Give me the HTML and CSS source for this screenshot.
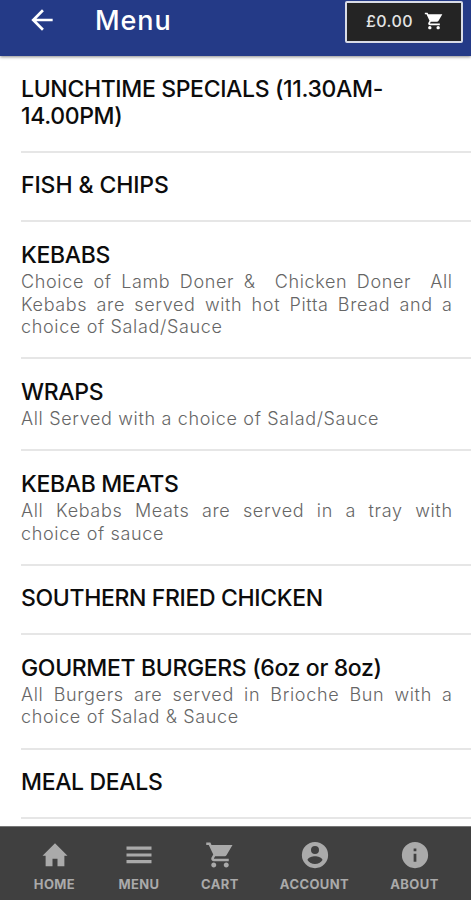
FILE: index.html
```html
<!DOCTYPE html>
<html lang="en">
<head>
<meta charset="utf-8">
<title>Menu</title>
<link rel="stylesheet" href="styles.css">
</head>
<body>
<div class="app">
  <header class="topbar">
    <svg class="back" viewBox="0 0 24 24"><path d="M20 11H7.83l5.59-5.59L12 4l-8 8 8 8 1.41-1.41L7.83 13H20v-2z"/></svg>
    <h1 class="title">Menu</h1>
    <div class="basket">
      <span class="total">£0.00</span>
      <svg class="basket-icon" viewBox="0 0 24 24"><path d="M7 18c-1.1 0-1.99.9-1.99 2S5.9 22 7 22s2-.9 2-2-.9-2-2-2zM1 2v2h2l3.6 7.59-1.35 2.45c-.16.28-.25.61-.25.96 0 1.1.9 2 2 2h12v-2H7.42c-.14 0-.25-.11-.25-.25l.03-.12.9-1.63h7.45c.75 0 1.41-.41 1.75-1.03L22 4H5.21l-.94-2H1zm16 16c-1.1 0-1.99.9-1.99 2s.89 2 1.99 2 2-.9 2-2-.9-2-2-2z"/></svg>
    </div>
  </header>
  <main class="list">
    <section class="row"><h2 class="name">LUNCHTIME SPECIALS (11.30AM-<br>14.00PM)</h2></section>
    <section class="row"><h2 class="name fish">FISH &amp; CHIPS</h2></section>
    <section class="row"><h2 class="name">KEBABS</h2>
      <p class="desc"><span class="line full">Choice of Lamb Doner &amp;&nbsp; Chicken Doner&nbsp; All</span><span class="line full">Kebabs are served with hot Pitta Bread and a</span><span class="line">choice of Salad/Sauce</span></p></section>
    <section class="row"><h2 class="name">WRAPS</h2>
      <p class="desc"><span class="line">All Served with a choice of Salad/Sauce</span></p></section>
    <section class="row"><h2 class="name">KEBAB MEATS</h2>
      <p class="desc"><span class="line full">All Kebabs Meats are served in a tray with</span><span class="line">choice of sauce</span></p></section>
    <section class="row"><h2 class="name">SOUTHERN FRIED CHICKEN</h2></section>
    <section class="row"><h2 class="name">GOURMET BURGERS (6oz or 8oz)</h2>
      <p class="desc"><span class="line full">All Burgers are served in Brioche Bun with a</span><span class="line">choice of Salad &amp; Sauce</span></p></section>
    <section class="row"><h2 class="name">MEAL DEALS</h2></section>
  </main>
  <nav class="tabs">
    <div class="tab"><svg viewBox="0 0 24 24"><path d="M10 21v-6h4v6h5.500v-8.500H22L12 2.500 2 12.500h2.500V21z"/></svg><span>HOME</span></div>
    <div class="tab"><svg viewBox="0 0 24 24"><path d="M2 18.500h20v-2.500H2v2.500zm0-5.300h20v-2.400H2v2.400zM2 5.200v2.500h20V5.200z"/></svg><span>MENU</span></div>
    <div class="tab"><svg viewBox="0 0 24 24"><path d="M7 18c-1.1 0-1.99.9-1.99 2S5.9 22 7 22s2-.9 2-2-.9-2-2-2zM1 2v2h2l3.6 7.59-1.35 2.45c-.16.28-.25.61-.25.96 0 1.1.9 2 2 2h12v-2H7.42c-.14 0-.25-.11-.25-.25l.03-.12.9-1.63h7.45c.75 0 1.41-.41 1.75-1.03L22 4H5.21l-.94-2H1zm16 16c-1.1 0-1.99.9-1.99 2s.89 2 1.99 2 2-.9 2-2-.9-2-2-2z"/></svg><span>CART</span></div>
    <div class="tab"><svg viewBox="0 0 24 24"><path d="M12 1.500a10.500 10.500 0 1 0 0 21 10.500 10.500 0 0 0 0-21zm0 3.200a3.200 3.200 0 1 1 0 6.400 3.200 3.200 0 0 1 0-6.400zm0 14.500c-2.500 0-4.710-1.280-6-3.220.03-1.990 4-3.080 6-3.080s5.970 1.090 6 3.080a7.200 7.200 0 0 1-6 3.220z"/></svg><span>ACCOUNT</span></div>
    <div class="tab"><svg viewBox="0 0 24 24"><path d="M12 1.500a10.500 10.500 0 1 0 0 21 10.500 10.500 0 0 0 0-21zm1.100 15.800h-2.200V11h2.200v6.300zm0-8.300h-2.200V6.800h2.200V9z"/></svg><span>ABOUT</span></div>
  </nav>
</div>
</body>
</html>
```
FILE: styles.css
```css
* { box-sizing: border-box; }
body { margin: 0; background: #fff; font-family: Inter, "Liberation Sans", sans-serif; }
.app { height: 900px; display: flex; flex-direction: column; overflow: hidden; }
.topbar { flex: none; height: 56.4px; display: flex; align-items: flex-start; background: #243a87; color: #fff; padding-right: 8px; box-shadow: 0 1px 3px #0007; z-index: 1; }
.back { width: 32px; height: 32px; margin: 4px 0 0 26px; fill: #fff; }
.title { margin: 5px 0 0 37px; font-size: 27px; line-height: 32px; font-weight: 500; letter-spacing: 0.9px; }
.basket { margin: 1px 0 0 auto; width: 118px; height: 42px; border: 2px solid #d8dbe6; border-radius: 2px; background: #242424; display: flex; align-items: center; padding: 0 17px 3px 19px; justify-content: space-between; }
.total { font-size: 16px; font-weight: 500; letter-spacing: 0.4px; color: #e4e4e4; }
.basket-icon { width: 20px; height: 20px; fill: #fff; }
.list { flex: 1; min-height: 0; overflow: hidden; padding-left: 21px; }
.row { padding: 19.3px 19px 21.2px 0; border-bottom: 2px solid #e6e6e6; }
.name { margin: 0; font-size: 23px; line-height: 27px; font-weight: 500; letter-spacing: -0.35px; color: #0c0c0c; white-space: nowrap; }
.fish { letter-spacing: -0.1px; }
.desc { margin: 0; padding-top: 2.4px; margin-bottom: -2.4px; font-size: 18px; line-height: 22.5px; font-weight: 300; letter-spacing: 0.65px; color: #666; }
.line { display: block; white-space: nowrap; }
.full { text-align-last: justify; white-space: normal; margin-right: -0.65px; }
.tabs { flex: none; height: 74px; display: grid; grid-template-columns: 97px 72px 90px 99px 101px; padding: 13px 12px 0 6px; background: #404040; border-top: 1px solid #777; }
.tab { display: flex; flex-direction: column; align-items: center; color: #aaa; font-size: 13px; line-height: 16px; font-weight: 700; letter-spacing: 0.4px; }
.tab svg { width: 30px; height: 30px; fill: #aaa; margin-bottom: 6px; }
```
